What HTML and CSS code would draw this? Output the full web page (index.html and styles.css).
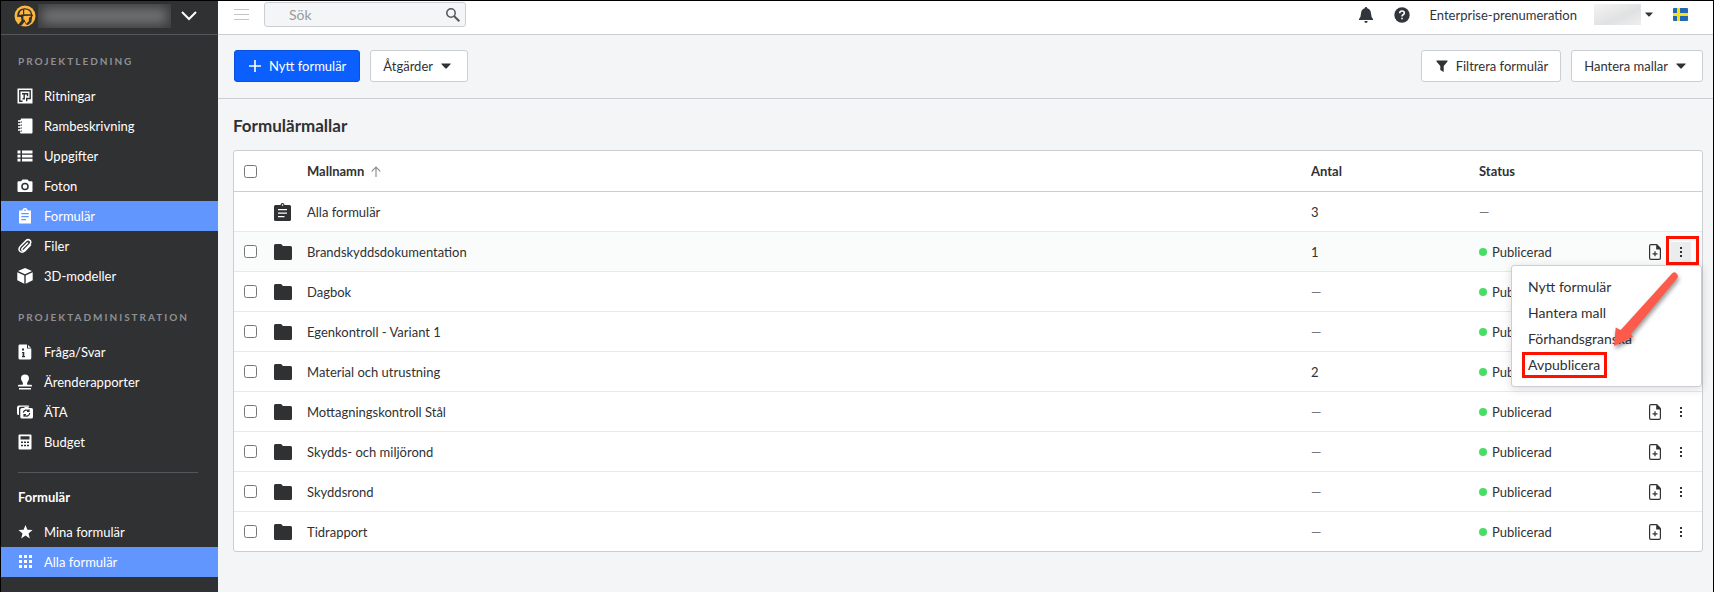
FILE: index.html
```html
<!DOCTYPE html>
<html lang="sv">
<head>
  <meta charset="UTF-8" />
  <meta name="viewport" content="width=device-width, initial-scale=1.0"/>
  <title>Formulärmallar</title>
  <link rel="stylesheet" href="styles.css">
</head>
<body>
  <!-- Ikoner -->
  <svg class="sprite" aria-hidden="true">
    <symbol id="i-drawing" viewBox="0 0 16 16"><path fill="currentColor" d="M.5.500h15v15H.5z"/><path fill="none" stroke="#303133" stroke-width="1.400" d="M5.500 13.200H2.800V2.800h10.400v7.700H9.700v2.700M5 5.700h5.500v2.500M7.200 5.700v5H5.500"/></symbol>
    <symbol id="i-notebook" viewBox="0 0 16 16"><path fill="currentColor" d="M4 .5h10.500q1 0 1 1v13q0 1-1 1H4q-1 0-1-1v-1h2v-1H3v-2h2v-1H3v-2h2v-1H3v-2h2v-1H3v-1q0-1 1-1z"/><path d="M1 3h3M1 6h3M1 9h3M1 12h3" stroke="currentColor" stroke-width="1.300"/></symbol>
    <symbol id="i-list" viewBox="0 0 16 16"><path fill="currentColor" d="M.5 2.500h3v3h-3zM5 2.500h10.500v3H5zM.5 6.800h3v2.600h-3zM5 6.800h10.500v2.600H5zM.5 10.800h3v2.700h-3zM5 10.800h10.500v2.700H5z"/></symbol>
    <symbol id="i-camera" viewBox="0 0 16 16"><path fill="currentColor" fill-rule="evenodd" d="M5.500 1.500h5L12 3.300h2.500q1 0 1 1v8.700q0 1-1 1h-13q-1 0-1-1V4.300q0-1 1-1H4zM8 4.700a3.800 3.800 0 1 0 0 7.600 3.800 3.800 0 0 0 0-7.600zm0 1.500a2.300 2.300 0 1 1 0 4.600 2.300 2.300 0 0 1 0-4.600z"/></symbol>
    <symbol id="i-clipboard" viewBox="0 0 16 16"><path fill="currentColor" fill-rule="evenodd" d="M2 2.500h3.500a2.500 2.500 0 0 1 5 0H14v13H2zM7.300 1.500v1.400h1.400V1.500zM4.300 5v1.200h7.400V5zm0 3v1.200h7.400V8zm0 3v1.200h4.700V11z"/></symbol>
    <symbol id="i-clip" viewBox="0 0 16 16"><path fill="none" stroke="currentColor" stroke-width="1.500" stroke-linecap="round" d="M10.500 5 5.300 10.300q-1 1.300 0 2t2-.3l5.600-5.800q1.700-2.200 0-3.800-2-1.600-3.900.2L3.400 8.300q-2.500 2.800-.5 5 2.200 2 4.900-.3L13.500 7"/></symbol>
    <symbol id="i-cube" viewBox="0 0 16 16"><path fill="currentColor" d="M8 0l7 3-7 3.300L1 3zM.3 4.300l7 3.300v8.100l-7-3.400zM15.700 4.300l-7 3.300v8.100l7-3.400z"/></symbol>
    <symbol id="i-info" viewBox="0 0 16 16"><path fill="currentColor" fill-rule="evenodd" d="M2.500.5H10v4h4.300v9.500q0 1.500-1.500 1.500H3q-1.500 0-1.500-1.500V2q0-1.500 1-1.500zM5 4.500v2h2v-2zM5 8v1h.6v3H5v1.200h3V12h-.7V8z"/><path fill="currentColor" d="M11 1l3 2.700h-3z"/></symbol>
    <symbol id="i-stamp" viewBox="0 0 16 16"><path fill="currentColor" d="M8 .5a4 4 0 0 1 4 4q0 1.500-1.500 3.500-.8 1.500-.2 2.700H14q1 0 1 1.300v.5H1V12q0-1.300 1-1.300h3.700q.6-1.200-.2-2.700Q4 6 4 4.500a4 4 0 0 1 4-4zM2 14h12v1.500H2z"/></symbol>
    <symbol id="i-ata" viewBox="0 0 16 16"><path fill="currentColor" fill-rule="evenodd" d="M2 1.500h9q1.300 0 1.300 1.300H3.500q-1.500 0-1.500 1.500V11Q0 11 0 9.500v-6q0-2 2-2zM5 4h2l.8-.9h3.400l.8.900h2.500q1.500 0 1.500 1.500v7.500q0 1.500-1.500 1.500H5q-1.700 0-1.700-1.500V5.500Q3.300 4 5 4z"/><path fill="none" stroke="#303133" stroke-width="1.200" d="M6.300 8.600a3.200 3.200 0 0 1 5.400-1.600M12.700 9a3.200 3.200 0 0 1-5.400 2.200M12 5.300v2.200h-2M7 12.700v-2.200h2"/></symbol>
    <symbol id="i-calc" viewBox="0 0 16 16"><path fill="currentColor" fill-rule="evenodd" d="M2.500.5h11q1 0 1 1v13q0 1-1 1h-11q-1 0-1-1v-13q0-1 1-1zM3.500 2.300v3.200h9V2.300zM4 7.500V9h2V7.500zm3 0V9h2V7.500zm3 0V9h2V7.500zm-6 3.300v1.500h2v-1.500zm3 0v1.500h2v-1.500zm3 0v1.500h2v-1.500z"/></symbol>
    <symbol id="i-star" viewBox="0 0 16 16"><path fill="currentColor" d="M8.500 1l1.900 4.800 5.100.3-4 3.300 1.300 5-4.300-2.800-4.300 2.800 1.300-5-4-3.300 5.100-.3z"/></symbol>
    <symbol id="i-grid" viewBox="0 0 16 16"><path fill="currentColor" d="M2 1h3v3H2zM7 1h3v3H7zM12 1h3v3h-3zM2 6h3v3H2zM7 6h3v3H7zM12 6h3v3h-3zM2 11h3v3H2zM7 11h3v3H7zM12 11h3v3h-3z"/></symbol>
    <symbol id="i-folder" viewBox="0 0 18 18"><path fill="currentColor" d="M1.500 1H6.500q1 0 1.500.8l.8 1.200H16.500q1.500 0 1.500 1.500v11q0 1.500-1.500 1.500h-15Q0 17 0 15.500v-13Q0 1 1.500 1z"/></symbol>
    <symbol id="i-form" viewBox="0 0 18 18"><path fill="currentColor" fill-rule="evenodd" d="M1.500 2h5a2 2 0 0 1 4 0h5q1.500 0 1.500 1.500v13q0 1.500-1.500 1.500h-14Q0 18 0 16.500v-13Q0 2 1.500 2zM7.900 1.300v1.500h1.300V1.300zM4 6v1.200h9V6zm0 3.500v1.200h9V9.500zM4 13v1.200h6.500V13z"/></symbol>
    <symbol id="i-doc" viewBox="0 0 12 16"><path fill="none" stroke="currentColor" stroke-width="1.200" d="M7.500.6H2Q.6.600.6 2v12Q.6 15.400 2 15.400h8q1.400 0 1.400-1.400V5M6 7.300v5M3.500 9.800h5"/><path fill="currentColor" d="M7.200 0h.8l4 4.200V5.500H7.200z"/></symbol>
    <symbol id="i-dots" viewBox="0 0 4 16"><path fill="currentColor" d="M1 3h2v2H1zM1 7h2v2H1zM1 11h2v2H1z"/></symbol>
    <symbol id="i-caret" viewBox="0 0 10 6"><path fill="currentColor" d="M.5.500h9q.5.300 0 .7L5.500 5.400q-.5.400-1 0L.5 1.200Q0 .8.500.500z"/></symbol>
  </svg>

  <aside class="sidebar">
    <div class="project">
      <svg class="logo" viewBox="0 0 22 22" aria-hidden="true">
        <circle cx="11" cy="11" r="10.500" fill="#fdb53c"/>
        <path fill="#303133" d="M3 11.800Q2.800 4 10.500 3.200q6.800-.2 7.800 6.300l.9 1.200-1 .8-.8 5.500-3.400 3-2-.5-1.500-2.800-1.500 2L7 21l-2.500-1.500 3-4-.5-3.500z"/>
        <path fill="#fdb53c" d="M5.200 10Q5.500 5.600 9 4.800v4.500h1.200V4.500q5.800-.3 6.700 4.800h-6q-3 0-5.700.7zM9.500 11l7.300-.2-.3 1.200-1.500.5-.2 3.700-2.600 2.600-1.700-4-1.200-.5z"/>
      </svg>
      <span class="project-name" aria-hidden="true"></span>
      <button class="project-toggle" aria-label="Välj projekt">
        <svg width="16" height="10" viewBox="0 0 16 10"><path fill="none" stroke="currentColor" stroke-width="2" d="M1 1l7 7 7-7"/></svg>
      </button>
    </div>

    <nav>
      <h2 class="nav-title">Projektledning</h2>
      <a class="nav-item" href="#"><svg><use href="#i-drawing"/></svg>Ritningar</a>
      <a class="nav-item" href="#"><svg><use href="#i-notebook"/></svg>Rambeskrivning</a>
      <a class="nav-item" href="#"><svg><use href="#i-list"/></svg>Uppgifter</a>
      <a class="nav-item" href="#"><svg><use href="#i-camera"/></svg>Foton</a>
      <a class="nav-item active" href="#"><svg><use href="#i-clipboard"/></svg>Formulär</a>
      <a class="nav-item" href="#"><svg><use href="#i-clip"/></svg>Filer</a>
      <a class="nav-item" href="#"><svg><use href="#i-cube"/></svg>3D-modeller</a>

      <h2 class="nav-title">Projektadministration</h2>
      <a class="nav-item" href="#"><svg><use href="#i-info"/></svg>Fråga/Svar</a>
      <a class="nav-item" href="#"><svg><use href="#i-stamp"/></svg>Ärenderapporter</a>
      <a class="nav-item" href="#"><svg><use href="#i-ata"/></svg>ÄTA</a>
      <a class="nav-item" href="#"><svg><use href="#i-calc"/></svg>Budget</a>

      <hr>
      <h2 class="nav-subtitle">Formulär</h2>
      <a class="nav-item" href="#"><svg><use href="#i-star"/></svg>Mina formulär</a>
      <a class="nav-item active" href="#"><svg><use href="#i-grid"/></svg>Alla formulär</a>
    </nav>
  </aside>

  <div class="content">
    <header class="topbar">
      <button class="icon-button burger" aria-label="Meny">
        <svg width="16" height="12" viewBox="0 0 16 12"><path stroke="currentColor" d="M0 .5h15M0 5.500h15M0 10.500h15"/></svg>
      </button>
      <div class="search">
        <input type="search" placeholder="Sök" aria-label="Sök">
        <svg width="14" height="14" viewBox="0 0 14 14" aria-hidden="true"><circle cx="5" cy="5" r="4.200" fill="none" stroke="currentColor" stroke-width="1.500"/><path d="M8 8l5.300 5.300" stroke="currentColor" stroke-width="2"/></svg>
      </div>
      <div class="topbar-right">
        <button class="icon-button" aria-label="Aviseringar">
          <svg width="16" height="16" viewBox="0 0 16 16"><path fill="currentColor" d="M8 0q1.200 0 1.300 1.300Q12.700 2.300 13 6.500q.1 3.500 2 5.500v1H1v-1q1.900-2 2-5.500.3-4.200 3.700-5.200Q6.800 0 8 0zM6.300 14h3.400Q9.500 16 8 16t-1.700-2z"/></svg>
        </button>
        <button class="icon-button help" aria-label="Hjälp">
          <svg width="16" height="16" viewBox="0 0 16 16"><circle cx="8" cy="8" r="7.700" fill="currentColor"/><path fill="none" stroke="#fff" stroke-width="1.600" d="M5.700 6.200Q5.800 4 8 4t2.300 1.900Q10.300 7 9 7.800q-1 .6-1 1.700"/><path fill="#fff" d="M7.200 10.700h1.600v1.600H7.200z"/></svg>
        </button>
        <span class="plan">Enterprise-prenumeration</span>
        <button class="icon-button user" aria-label="Konto">
          <span class="user-name"></span>
          <svg width="8" height="5"><use href="#i-caret"/></svg>
        </button>
        <button class="icon-button flag" aria-label="Språk: svenska">
          <svg width="15" height="13" viewBox="0 0 15 13"><rect width="15" height="13" rx="1" fill="#2468b4"/><path fill="#fddf12" d="M4 0h3v13H4z"/><path fill="#fddf12" d="M0 5h15v3H0z"/></svg>
        </button>
      </div>
    </header>

    <div class="toolbar">
      <button class="btn btn-primary"><svg width="12" height="12" viewBox="0 0 12 12"><path stroke="currentColor" stroke-width="1.600" d="M6 0v12M0 6h12"/></svg>Nytt formulär</button>
      <button class="btn">Åtgärder<svg width="10" height="6"><use href="#i-caret"/></svg></button>
      <button class="btn btn-filter"><svg width="12" height="12" viewBox="0 0 12 12"><path fill="currentColor" d="M.5.500h11v1L7.700 6v6L4.300 10V6L.5 1.500z"/></svg>Filtrera formulär</button>
      <button class="btn">Hantera mallar<svg width="10" height="6"><use href="#i-caret"/></svg></button>
    </div>

    <main>
      <h1>Formulärmallar</h1>
      <div class="card">
        <table>
          <thead>
            <tr>
              <th class="col-check"><input type="checkbox" aria-label="Markera alla"></th>
              <th class="col-icon"></th>
              <th aria-sort="ascending"><button class="sort">Mallnamn<svg width="10" height="11" viewBox="0 0 10 11"><path fill="none" stroke="currentColor" stroke-width="1.200" d="M5 11V1M.7 5.300L5 1l4.300 4.300"/></svg></button></th>
              <th class="col-count">Antal</th>
              <th class="col-status">Status</th>
              <th class="col-actions"></th>
            </tr>
          </thead>
          <tbody>
            <tr>
              <td></td>
              <td><svg class="row-icon"><use href="#i-form"/></svg></td>
              <td>Alla formulär</td>
              <td>3</td>
              <td><span class="dash">—</span></td>
              <td></td>
            </tr>
            <tr class="hover">
              <td><input type="checkbox" aria-label="Brandskyddsdokumentation"></td>
              <td><svg class="row-icon"><use href="#i-folder"/></svg></td>
              <td>Brandskyddsdokumentation</td>
              <td>1</td>
              <td><span class="status">Publicerad</span></td>
              <td>
                <div class="actions">
                  <button class="icon-button" aria-label="Nytt formulär"><svg width="12" height="16"><use href="#i-doc"/></svg></button>
                  <button class="icon-button more open marked" aria-label="Fler val"><svg width="4" height="16"><use href="#i-dots"/></svg></button>
                  <div class="menu">
                    <button>Nytt formulär</button>
                    <button>Hantera mall</button>
                    <button>Förhandsgranska</button>
                    <button class="marked">Avpublicera</button>
                    <svg class="arrow" width="80" height="84" viewBox="0 0 80 84" aria-hidden="true"><path fill="#fc5a4b" d="M66 3.500Q69 1 71 4t-.5 5L25 64l2 2.700L8 76l1.700-18.500 5 2.500z"/></svg>
                  </div>
                </div>
              </td>
            </tr>
            <tr>
              <td><input type="checkbox" aria-label="Dagbok"></td>
              <td><svg class="row-icon"><use href="#i-folder"/></svg></td>
              <td>Dagbok</td>
              <td><span class="dash">—</span></td>
              <td><span class="status">Publicerad</span></td>
              <td></td>
            </tr>
            <tr>
              <td><input type="checkbox" aria-label="Egenkontroll - Variant 1"></td>
              <td><svg class="row-icon"><use href="#i-folder"/></svg></td>
              <td>Egenkontroll - Variant 1</td>
              <td><span class="dash">—</span></td>
              <td><span class="status">Publicerad</span></td>
              <td></td>
            </tr>
            <tr>
              <td><input type="checkbox" aria-label="Material och utrustning"></td>
              <td><svg class="row-icon"><use href="#i-folder"/></svg></td>
              <td>Material och utrustning</td>
              <td>2</td>
              <td><span class="status">Publicerad</span></td>
              <td></td>
            </tr>
            <tr>
              <td><input type="checkbox" aria-label="Mottagningskontroll Stål"></td>
              <td><svg class="row-icon"><use href="#i-folder"/></svg></td>
              <td>Mottagningskontroll Stål</td>
              <td><span class="dash">—</span></td>
              <td><span class="status">Publicerad</span></td>
              <td>
                <div class="actions">
                  <button class="icon-button" aria-label="Nytt formulär"><svg width="12" height="16"><use href="#i-doc"/></svg></button>
                  <button class="icon-button more" aria-label="Fler val"><svg width="4" height="16"><use href="#i-dots"/></svg></button>
                </div>
              </td>
            </tr>
            <tr>
              <td><input type="checkbox" aria-label="Skydds- och miljörond"></td>
              <td><svg class="row-icon"><use href="#i-folder"/></svg></td>
              <td>Skydds- och miljörond</td>
              <td><span class="dash">—</span></td>
              <td><span class="status">Publicerad</span></td>
              <td>
                <div class="actions">
                  <button class="icon-button" aria-label="Nytt formulär"><svg width="12" height="16"><use href="#i-doc"/></svg></button>
                  <button class="icon-button more" aria-label="Fler val"><svg width="4" height="16"><use href="#i-dots"/></svg></button>
                </div>
              </td>
            </tr>
            <tr>
              <td><input type="checkbox" aria-label="Skyddsrond"></td>
              <td><svg class="row-icon"><use href="#i-folder"/></svg></td>
              <td>Skyddsrond</td>
              <td><span class="dash">—</span></td>
              <td><span class="status">Publicerad</span></td>
              <td>
                <div class="actions">
                  <button class="icon-button" aria-label="Nytt formulär"><svg width="12" height="16"><use href="#i-doc"/></svg></button>
                  <button class="icon-button more" aria-label="Fler val"><svg width="4" height="16"><use href="#i-dots"/></svg></button>
                </div>
              </td>
            </tr>
            <tr>
              <td><input type="checkbox" aria-label="Tidrapport"></td>
              <td><svg class="row-icon"><use href="#i-folder"/></svg></td>
              <td>Tidrapport</td>
              <td><span class="dash">—</span></td>
              <td><span class="status">Publicerad</span></td>
              <td>
                <div class="actions">
                  <button class="icon-button" aria-label="Nytt formulär"><svg width="12" height="16"><use href="#i-doc"/></svg></button>
                  <button class="icon-button more" aria-label="Fler val"><svg width="4" height="16"><use href="#i-dots"/></svg></button>
                </div>
              </td>
            </tr>
          </tbody>
        </table>
      </div>
    </main>
  </div>
</body>
</html>
```

FILE: styles.css
```css
* {
  box-sizing: border-box;
}
body {
  margin: 0;
  min-height: 100vh;
  display: flex;
  border: 1px solid #000;
  background-color: #f4f5f7;
  color: #303133;
  font-family: Lato, "Liberation Sans", sans-serif;
  font-size: 13px;
  line-height: 20px;
}
button, input {
  font: inherit;
  color: inherit;
}
button {
  cursor: pointer;
}
.sprite {
  display: none;
}
.icon-button {
  display: flex;
  align-items: center;
  justify-content: center;
  padding: 0;
  border: none;
  background: none;
}

/* Sidomeny */
.sidebar {
  flex: none;
  width: 217px;
  background-color: #303133;
  color: #fff;
}
.project {
  display: flex;
  align-items: center;
  height: 34px;
  padding: 0 20px 4px 13px;
  border-bottom: 1px solid #55565a;
}
.logo {
  width: 22px;
  height: 22px;
}
.project-name {
  width: 133px;
  height: 24px;
  margin: 0 10px 0 2px;
  background-color: #737373;
  box-shadow: inset 0 0 12px 4px #3a3b3d;
}
.project-toggle {
  display: flex;
  padding: 0;
  border: none;
  background: none;
}
.nav-title {
  margin: 0;
  padding: 16px 17px 10px;
  font-size: 10px;
  letter-spacing: 2px;
  text-transform: uppercase;
  color: #8f9094;
}
.nav-item {
  display: flex;
  align-items: center;
  gap: 11px;
  height: 30px;
  padding-left: 16px;
  color: #fff;
  text-decoration: none;
}
.nav-item svg {
  width: 16px;
  height: 16px;
}
.nav-item.active {
  background-color: #6296ff;
}
.sidebar hr {
  margin: 15px 20px 14px 17px;
  border: none;
  border-top: 1px solid #55565a;
}
.nav-subtitle {
  margin: 0;
  padding: 0 17px 10px;
  font-size: 13px;
}

/* Toppmeny */
.content {
  flex: 1;
  min-width: 0;
}
.topbar {
  display: flex;
  align-items: center;
  height: 34px;
  padding: 0 25px 6px 16px;
  background-color: #fff;
  border-bottom: 1px solid #cbcccf;
}
.burger {
  color: #c4c5c8;
}
.search {
  display: flex;
  align-items: center;
  width: 202px;
  height: 25px;
  margin-left: 14px;
  padding: 0 5px 0 24px;
  background-color: #f4f5f7;
  border: 1px solid #cbced2;
  border-radius: 3px;
  color: #55565a;
  font-size: 14px;
}
.search input {
  flex: 1;
  min-width: 0;
  padding: 0;
  border: none;
  outline: none;
  background: none;
}
.search input::placeholder {
  color: #98999c;
}
.topbar-right {
  display: flex;
  align-items: center;
  margin-left: auto;
  color: #32353c;
}
.help {
  margin: 0 20px;
}
.user {
  gap: 4px;
  margin: 0 20px 0 17px;
}
.user-name {
  width: 47px;
  height: 21px;
  background: linear-gradient(to bottom right, #f4f4f4, #e0e1e2 60%, #efeff0);
}

/* Knappar */
.toolbar {
  display: flex;
  align-items: center;
  gap: 10px;
  height: 64px;
  padding: 0 10px 2px 16px;
  border-bottom: 1px solid #cbced2;
}
.btn {
  display: flex;
  align-items: center;
  gap: 8px;
  height: 32px;
  padding: 0 16px 0 12px;
  background-color: #fff;
  border: 1px solid #cbced2;
  border-radius: 3px;
}
.btn-primary {
  padding: 0 13px 0 14px;
  background-color: #0b5fff;
  border-color: #0a50d8;
  color: #fff;
}
.btn-filter {
  margin-left: auto;
  padding: 0 12px 0 14px;
}

/* Tabell */
main {
  padding: 17px 10px 40px 15px;
}
h1 {
  margin: 0 0 14px;
  font-size: 17px;
}
.card {
  background-color: #fff;
  border: 1px solid #cbced2;
  border-radius: 3px;
}
table {
  width: 100%;
  table-layout: fixed;
  border-collapse: separate;
  border-spacing: 0;
}
th, td {
  height: 40px;
  padding: 0;
  text-align: left;
  border-bottom: 1px solid #e7e8ea;
}
th {
  height: 41px;
  border-bottom-color: #cbced2;
}
tr:last-child td {
  height: 39px;
  border-bottom: none;
}
thead tr:last-child th {
  border-bottom: 1px solid #cbced2;
}
.hover td {
  background-color: #fafcfb;
}
.col-check {
  width: 40px;
}
.col-icon {
  width: 33px;
}
.col-count {
  width: 168px;
}
.col-status {
  width: 143px;
}
.col-actions {
  width: 80px;
}
input[type="checkbox"] {
  display: block;
  width: 13px;
  height: 13px;
  margin: 0 0 0 10px;
}
.row-icon {
  display: block;
  width: 18px;
  height: 18px;
}
.sort {
  display: flex;
  align-items: center;
  gap: 7px;
  padding: 0;
  border: none;
  background: none;
}
.sort svg {
  color: #8f9094;
}
.dash {
  color: #77787b;
}
.status {
  display: flex;
  align-items: center;
  gap: 5px;
}
.status::before {
  content: "";
  width: 8px;
  height: 8px;
  border-radius: 50%;
  background-color: #49dc68;
}
.actions {
  position: relative;
  display: flex;
  align-items: center;
  justify-content: flex-end;
  gap: 10px;
  padding-right: 11px;
}
.more {
  width: 20px;
  height: 20px;
}
.more.open {
  background-color: #ebecee;
}
.menu {
  position: absolute;
  z-index: 1;
  top: 23px;
  right: 0;
  display: flex;
  flex-direction: column;
  width: 191px;
  padding: 8px 0;
  background-color: #fff;
  border: 1px solid #cbced2;
  border-radius: 3px;
  box-shadow: 0 2px 10px rgba(0, 0, 0, 0.15);
  font-size: 14px;
}
.menu button {
  align-self: flex-start;
  height: 26px;
  padding: 0 7px 0 6px;
  margin-left: 10px;
  border: none;
  background: none;
}
.marked {
  position: relative;
}
.marked::after {
  content: "";
  position: absolute;
  inset: 0;
  border: 3px solid #fd1200;
}
.more.marked::after {
  inset: -6px -8px -3px -5px;
}
.arrow {
  position: absolute;
  top: 4px;
  left: 94px;
  filter: drop-shadow(1px 3px 2px rgba(0, 0, 0, 0.4));
}
```
